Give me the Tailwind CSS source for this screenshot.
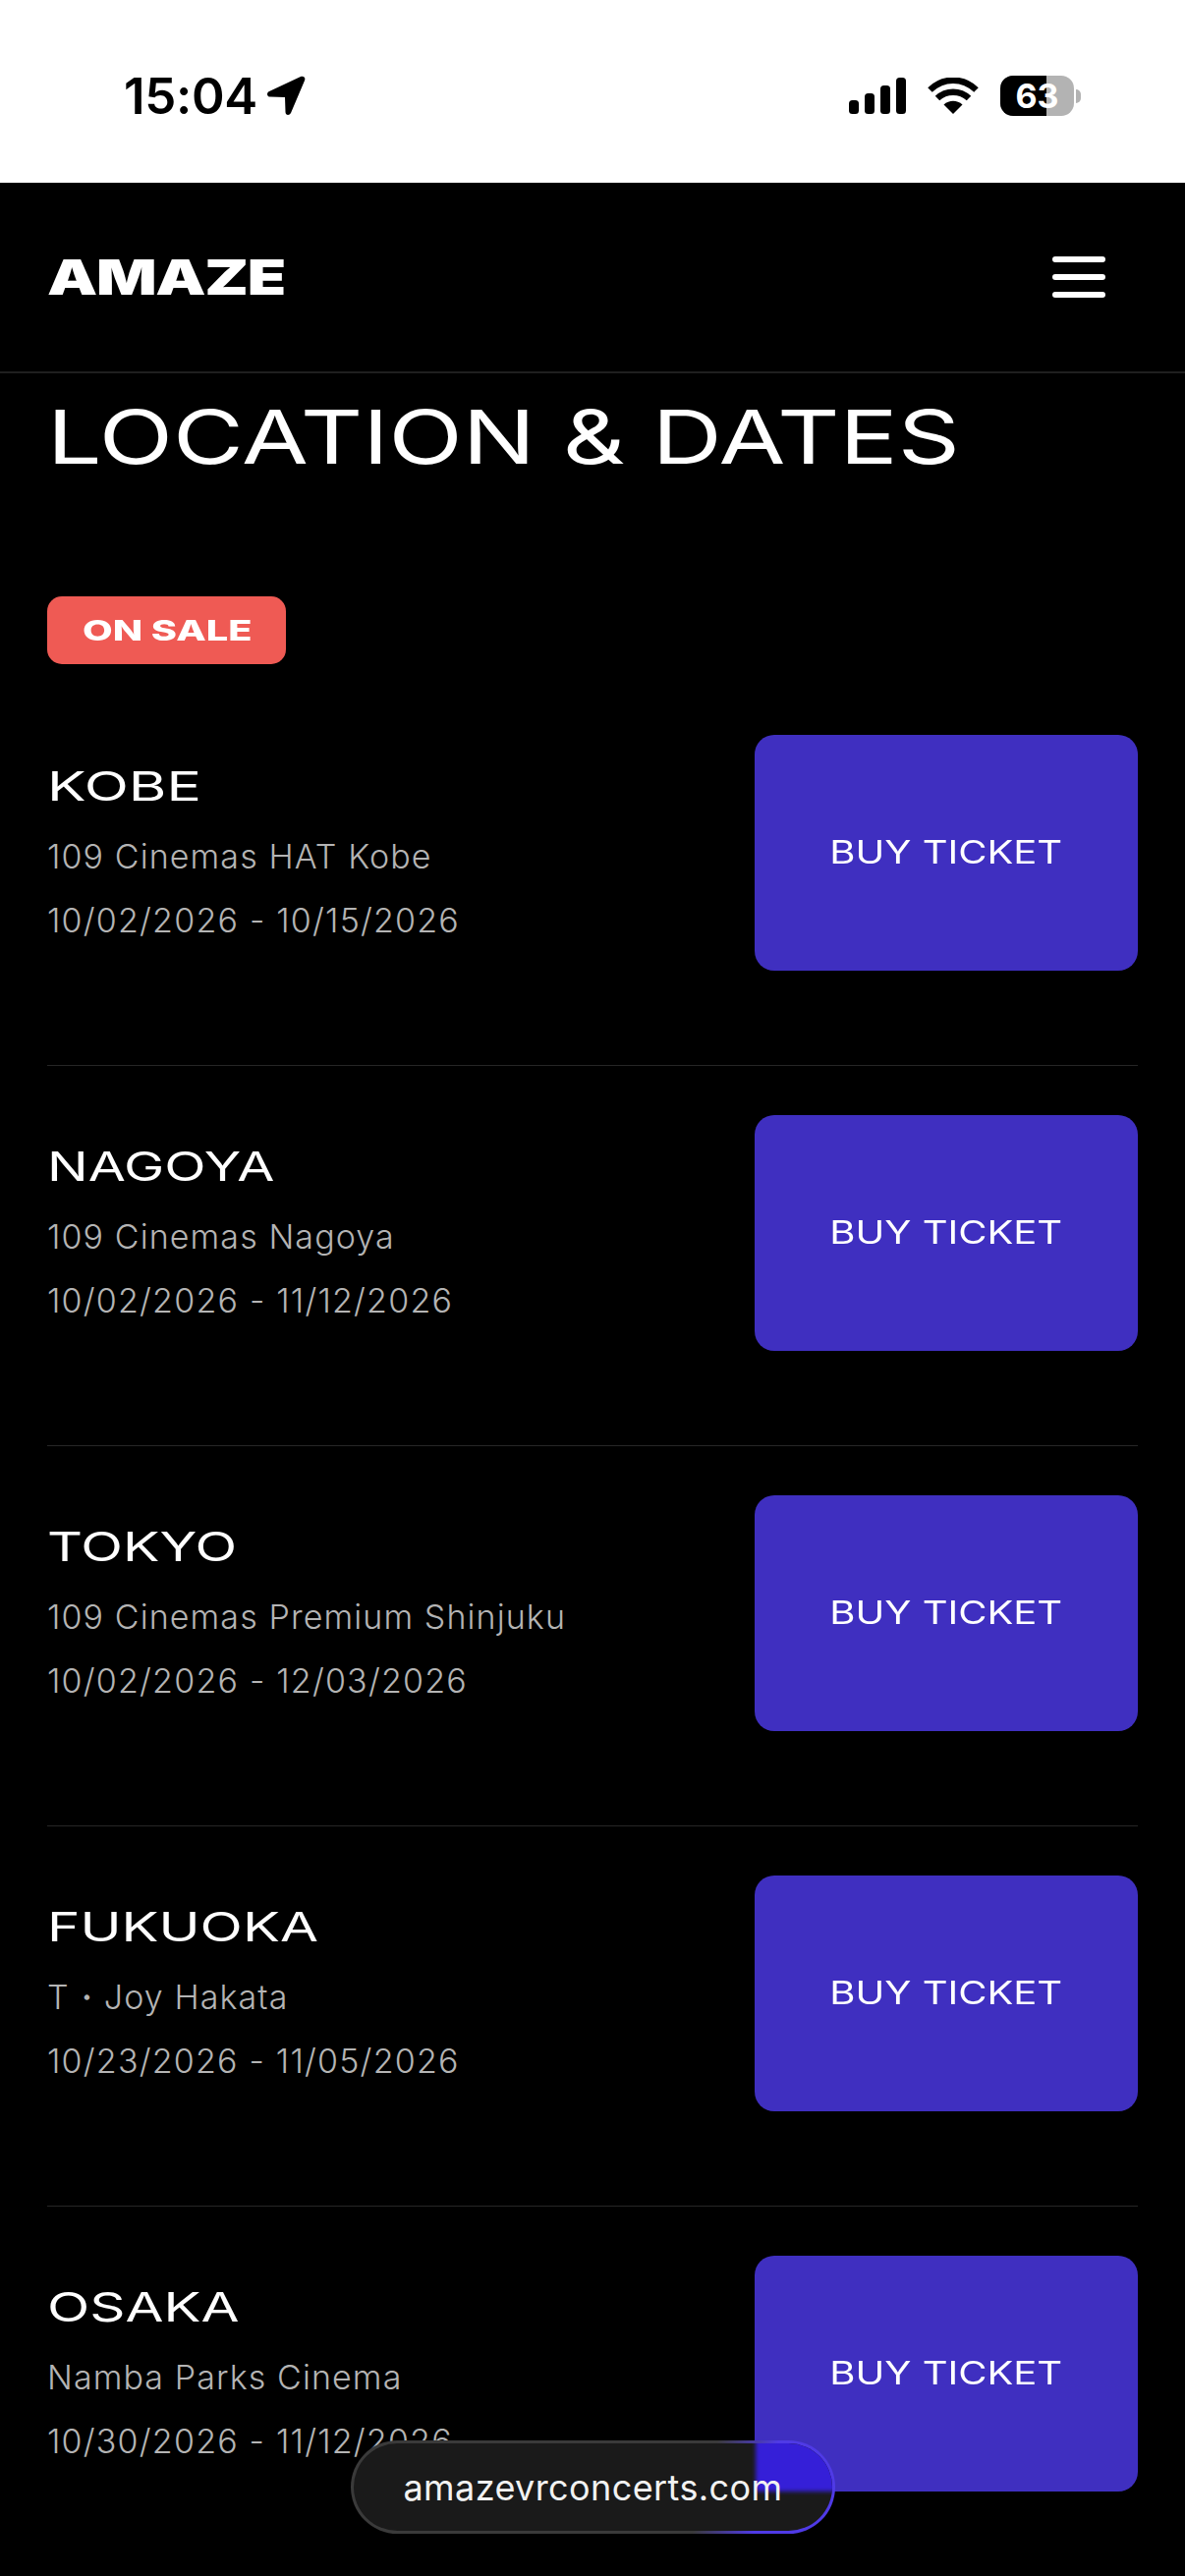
<!DOCTYPE html>
<html>
    <head>
        <meta charset="UTF-8" />
        <meta name="viewport" content="width=device-width, initial-scale=1.0" />
        <script src="https://cdn.jsdelivr.net/npm/@tailwindcss/browser@4"></script>
    </head>
    <body class="bg-black">
        <div class="relative w-[1206px] h-[2622px] overflow-hidden bg-black font-['Inter',sans-serif] text-white">
            <!-- status bar -->
            <div class="h-[186px] bg-white text-black flex items-start justify-between pt-[77px] pl-[126px] pr-[106px]">
                <div class="flex items-center gap-[9px] h-[41px]">
                    <span class="text-[51px] leading-none font-semibold tracking-[-0.3px]">15:04</span>
                    <svg width="40" height="41" viewBox="0 0 40 41" class="fill-black"><path d="M35 1 3 16c-3 1.500-2.500 5.500 1 5.500l15 .5.500 15c0 3.500 4 4 5.500 1L39 5c1.300-3-1-5-4-4Z" /></svg>
                </div>
                <div class="flex items-center h-[41px]">
                    <svg width="58" height="37" viewBox="0 0 58 37" class="fill-black">
                        <rect x="0" y="23" width="10" height="14" rx="3.500" />
                        <rect x="16" y="16" width="10" height="21" rx="3.500" />
                        <rect x="32" y="8" width="10" height="29" rx="3.500" />
                        <rect x="48" y="0" width="10" height="37" rx="3.500" />
                    </svg>
                    <svg width="52" height="37" viewBox="0 0 52 37" class="ml-[22px]">
                        <path d="M26 37 16.500 27.500C22 22.500 30 22.500 35.500 27.500Z" fill="#000" />
                        <path d="M10 21C19 12.500 33 12.500 42 21" fill="none" stroke="#000" stroke-width="6.500" />
                        <path d="M2.500 12.500C16 -0.500 36 -0.500 49.500 12.500" fill="none" stroke="#000" stroke-width="6.500" />
                    </svg>
                    <div class="relative ml-[22px] w-[75px] h-[41px] rounded-[13px] overflow-hidden bg-[#b3b3b3]">
                        <div class="h-full w-[47px] bg-black"></div>
                        <span class="absolute inset-0 flex items-center justify-center text-[34px] leading-none font-bold text-white">63</span>
                    </div>
                    <div class="ml-[2px] w-[5px] h-[14px] rounded-r-full bg-[#b3b3b3]"></div>
                </div>
            </div>

            <!-- header -->
            <header class="h-[194px] border-b-2 border-[#1f1f1f] flex items-center justify-between pl-[48px] pr-[81px]">
                <span class="inline-block origin-left scale-x-[1.29] text-[50px] leading-none font-black tracking-[-1px]">AMAZE</span>
                <div class="flex flex-col gap-[12px] w-[54px]">
                    <div class="h-[6px] rounded-full bg-white"></div>
                    <div class="h-[6px] rounded-full bg-white"></div>
                    <div class="h-[6px] rounded-full bg-white"></div>
                </div>
            </header>

            <main class="px-[48px]">
                <h1 class="mt-[17px] h-[94px] leading-[94px] text-[76px] font-normal origin-left scale-x-[1.295] whitespace-nowrap">LOCATION &amp; DATES</h1>
                <div class="mt-[116px] w-[243px] h-[69px] rounded-[15px] bg-[#ef5a54] flex items-center pl-[36px]">
                    <span class="inline-block origin-left scale-x-[1.37] text-[29px] leading-none font-extrabold">ON SALE</span>
                </div>

                <section class="mt-[22px]">
                    <div class="h-[387px] pt-[50px] border-b border-[#262626] flex justify-between items-start">
                        <div class="pt-[29px]">
                            <h2 class="h-[46px] leading-[46px] text-[41px] font-normal origin-left scale-x-[1.44] whitespace-nowrap">KOBE</h2>
                            <p class="mt-[16px] text-[34px] leading-[65px] font-light tracking-[1.1px] text-[#b4b4b4]">109 Cinemas HAT Kobe</p>
                            <p class="text-[34px] leading-[65px] font-light tracking-[1.2px] text-[#b4b4b4]">10/02/2026 - 10/15/2026</p>
                        </div>
                        <button class="w-[390px] h-[240px] rounded-[20px] bg-[#3f2fc0] flex items-center justify-center">
                            <span class="inline-block scale-x-[1.25] text-[32px] leading-none font-normal">BUY TICKET</span>
                        </button>
                    </div>
                    <div class="h-[387px] pt-[50px] border-b border-[#262626] flex justify-between items-start">
                        <div class="pt-[29px]">
                            <h2 class="h-[46px] leading-[46px] text-[41px] font-normal origin-left scale-x-[1.35] whitespace-nowrap">NAGOYA</h2>
                            <p class="mt-[16px] text-[34px] leading-[65px] font-light tracking-[1.1px] text-[#b4b4b4]">109 Cinemas Nagoya</p>
                            <p class="text-[34px] leading-[65px] font-light tracking-[1.2px] text-[#b4b4b4]">10/02/2026 - 11/12/2026</p>
                        </div>
                        <button class="w-[390px] h-[240px] rounded-[20px] bg-[#3f2fc0] flex items-center justify-center">
                            <span class="inline-block scale-x-[1.25] text-[32px] leading-none font-normal">BUY TICKET</span>
                        </button>
                    </div>
                    <div class="h-[387px] pt-[50px] border-b border-[#262626] flex justify-between items-start">
                        <div class="pt-[29px]">
                            <h2 class="h-[46px] leading-[46px] text-[41px] font-normal origin-left scale-x-[1.36] whitespace-nowrap">TOKYO</h2>
                            <p class="mt-[16px] text-[34px] leading-[65px] font-light tracking-[1.1px] text-[#b4b4b4]">109 Cinemas Premium Shinjuku</p>
                            <p class="text-[34px] leading-[65px] font-light tracking-[1.2px] text-[#b4b4b4]">10/02/2026 - 12/03/2026</p>
                        </div>
                        <button class="w-[390px] h-[240px] rounded-[20px] bg-[#3f2fc0] flex items-center justify-center">
                            <span class="inline-block scale-x-[1.25] text-[32px] leading-none font-normal">BUY TICKET</span>
                        </button>
                    </div>
                    <div class="h-[387px] pt-[50px] border-b border-[#262626] flex justify-between items-start">
                        <div class="pt-[29px]">
                            <h2 class="h-[46px] leading-[46px] text-[41px] font-normal origin-left scale-x-[1.38] whitespace-nowrap">FUKUOKA</h2>
                            <p class="mt-[16px] text-[34px] leading-[65px] font-light tracking-[1.1px] text-[#b4b4b4]">T・Joy Hakata</p>
                            <p class="text-[34px] leading-[65px] font-light tracking-[1.2px] text-[#b4b4b4]">10/23/2026 - 11/05/2026</p>
                        </div>
                        <button class="w-[390px] h-[240px] rounded-[20px] bg-[#3f2fc0] flex items-center justify-center">
                            <span class="inline-block scale-x-[1.25] text-[32px] leading-none font-normal">BUY TICKET</span>
                        </button>
                    </div>
                    <div class="h-[387px] pt-[50px] flex justify-between items-start">
                        <div class="pt-[29px]">
                            <h2 class="h-[46px] leading-[46px] text-[41px] font-normal origin-left scale-x-[1.38] whitespace-nowrap">OSAKA</h2>
                            <p class="mt-[16px] text-[34px] leading-[65px] font-light tracking-[1.1px] text-[#b4b4b4]">Namba Parks Cinema</p>
                            <p class="text-[34px] leading-[65px] font-light tracking-[1.2px] text-[#b4b4b4]">10/30/2026 - 11/12/2026</p>
                        </div>
                        <button class="w-[390px] h-[240px] rounded-[20px] bg-[#3f2fc0] flex items-center justify-center">
                            <span class="inline-block scale-x-[1.25] text-[32px] leading-none font-normal">BUY TICKET</span>
                        </button>
                    </div>
                </section>
            </main>

            <!-- safari address pill -->
            <div class="absolute left-[357px] top-[2484px] w-[493px] h-[95px] rounded-full p-[3px] bg-[linear-gradient(105deg,#3a3a3a_0%,#3a3a3a_72%,#4f3ae6_84%)]">
                <div class="relative w-full h-full rounded-full overflow-hidden bg-[#1a1a1a] flex items-center justify-center">
                    <div class="absolute left-[409px] -top-[10px] w-[100px] h-[59px] bg-[#351fd8] blur-[2px]"></div>
                    <span class="relative text-[36px] leading-none tracking-[0.4px] text-[#f2f2f2]">amazevrconcerts.com</span>
                </div>
            </div>
        </div>
    </body>
</html>
